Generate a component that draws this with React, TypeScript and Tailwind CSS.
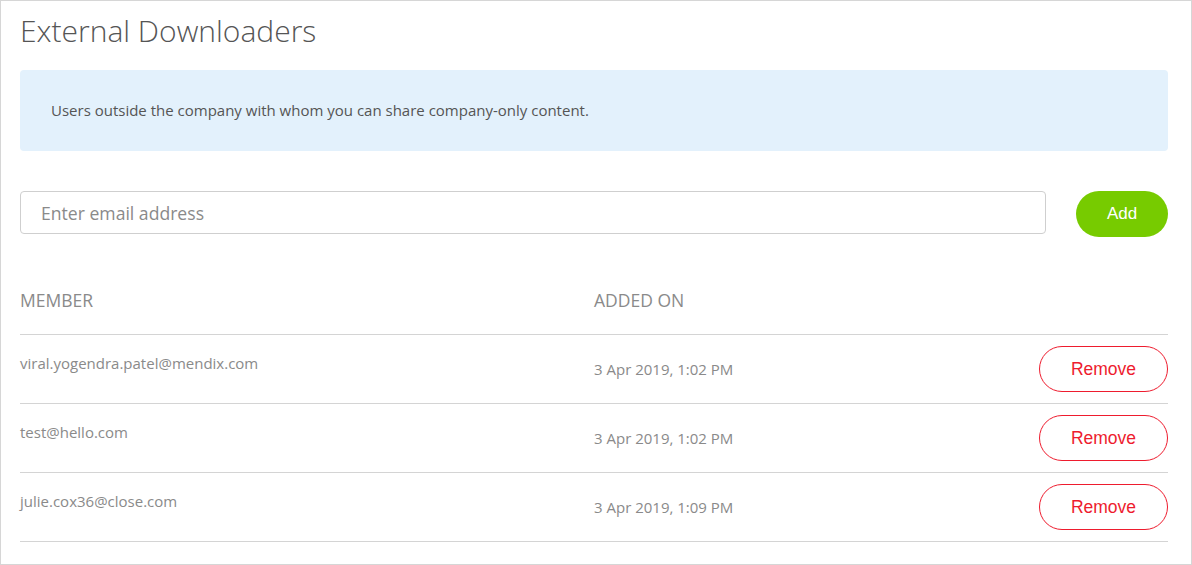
const members = [
  { email: 'viral.yogendra.patel@mendix.com', added: '3 Apr 2019, 1:02 PM' },
  { email: 'test@hello.com', added: '3 Apr 2019, 1:02 PM' },
  { email: 'julie.cox36@close.com', added: '3 Apr 2019, 1:09 PM' },
];

export default function App() {
  return (
    <div
      className="w-[1192px] h-[565px] border border-[#d6d6d6] bg-white pl-[19px] pr-[23px] text-[#555]"
      style={{ fontFamily: '"Open Sans", sans-serif' }}
    >
      <h1 className="pt-[10px] text-[30px] font-light leading-[40px] text-[#555]">External Downloaders</h1>

      <div className="mt-[19px] flex h-[81px] items-center rounded-[4px] bg-[#e3f1fc] px-[31px] text-[15px] text-[#555]">
        Users outside the company with whom you can share company-only content.
      </div>

      <div className="mt-[40px] flex items-start gap-[30px]">
        <input
          type="text"
          placeholder="Enter email address"
          className="h-[43px] flex-1 rounded-[4px] border border-[#cfcfcf] px-[20px] text-[17.6px] text-[#555] outline-none placeholder:text-[#8a8a8a]"
        />
        <button
          className="h-[46px] w-[92px] shrink-0 rounded-full bg-[#77cb00] text-[17px] text-white"
          style={{ fontFamily: '"Liberation Sans", Arial, sans-serif' }}
        >
          Add
        </button>
      </div>

      <div className="mt-[42px] flex h-[56px] items-center border-b border-[#d4d4d4] pb-[13px] text-[17.5px] text-[#8a8a8a]">
        <div className="w-[574px]">MEMBER</div>
        <div>ADDED ON</div>
      </div>

      {members.map((m, i) => (
        <div key={i} className="flex h-[69px] border-b border-[#d4d4d4] text-[15px] text-[#8a8a8a]">
          <div className="w-[574px] shrink-0 pt-[17px]">{m.email}</div>
          <div className="flex flex-1 items-center">{m.added}</div>
          <div className="flex shrink-0 items-center">
            <button
              className="h-[46px] w-[129px] rounded-full border border-[#ee1c2e] text-[17.5px] text-[#ee1c2e]"
              style={{ fontFamily: '"Liberation Sans", Arial, sans-serif' }}
            >
              Remove
            </button>
          </div>
        </div>
      ))}
    </div>
  );
}
